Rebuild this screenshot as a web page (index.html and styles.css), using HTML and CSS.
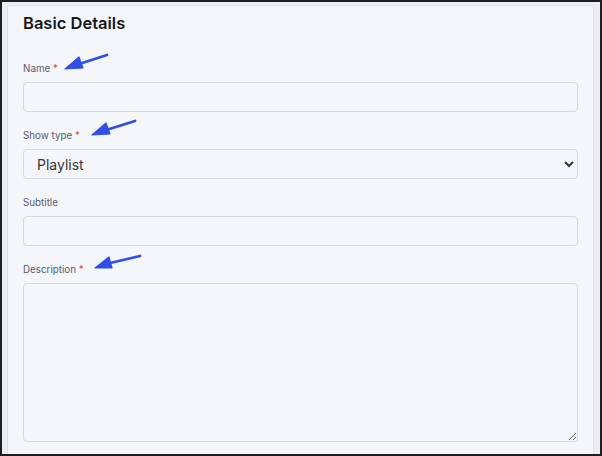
FILE: index.html
```html
<!DOCTYPE html>
<html>
<head>
<meta charset="utf-8">
<link rel="stylesheet" href="styles.css">
</head>
<body>
<div class="frame">
  <section class="card">
    <h2 class="title">Basic Details</h2>
    <div class="field">
      <label class="label">Name <span class="req">*</span></label>
      <input class="control" type="text">
    </div>
    <div class="field">
      <label class="label">Show type <span class="req">*</span></label>
      <select class="control select"><option>Playlist</option></select>
    </div>
    <div class="field">
      <label class="label">Subtitle</label>
      <input class="control" type="text">
    </div>
    <div class="field">
      <label class="label">Description <span class="req">*</span></label>
      <textarea class="control area"></textarea>
    </div>
  </section>
  <svg class="arrows" width="602" height="456" viewBox="0 0 602 456">
    <g fill="#2f4fe6" stroke="#2f4fe6" stroke-linecap="round" stroke-linejoin="round">
      <line x1="107" y1="55" x2="76" y2="65" stroke-width="2.8"/>
      <polygon points="65,69 79,57 83,68" stroke-width="1.2"/>
      <line x1="135" y1="121" x2="103" y2="131" stroke-width="2.8"/>
      <polygon points="92,135 106,123 110,134" stroke-width="1.2"/>
      <line x1="140" y1="256" x2="106" y2="264" stroke-width="2.8"/>
      <polygon points="95,268 109,257 112,268" stroke-width="1.2"/>
    </g>
  </svg>
</div>
</body>
</html>
```
FILE: styles.css
```css
* { box-sizing: border-box; }
html, body { margin: 0; padding: 0; }
body { font-family: Inter, "Noto Sans", sans-serif; }
.frame {
  position: relative;
  width: 602px;
  height: 456px;
  border: 2px solid #1e1e20;
  background: #ebecf4;
  overflow: hidden;
}
.card {
  margin: 3px 0 0 5px;
  width: 587px;
  height: 480px;
  background: #f5f6fa;
  border: 1px solid #dfe1ea;
  border-radius: 2px;
  padding: 5px 14px 0 15px;
}
.title {
  margin: 0;
  font-size: 16.5px;
  line-height: 24px;
  font-weight: 600;
  color: #16171b;
}
.field {
  display: flex;
  flex-direction: column;
  margin-top: 17px;
}
.field:first-of-type { margin-top: 27px; }
.label {
  font-size: 9.8px;
  line-height: 14px;
  font-weight: 400;
  color: #555a6e;
  margin-bottom: 6px;
}
.req { color: #e23b3b; }
.control {
  display: block;
  width: 555px;
  height: 30px;
  border: 1px solid #d6d8df;
  border-radius: 4px;
  background: #f5f6fa;
  font-family: Inter, "Noto Sans", sans-serif;
  font-size: 14px;
  color: #33343a;
  padding: 0 8px 0 13px;
  outline: none;
}
.select { padding-left: 9px; }
.area { height: 159px; resize: vertical; }
.arrows {
  position: absolute;
  left: -2px;
  top: -2px;
  pointer-events: none;
}
```
